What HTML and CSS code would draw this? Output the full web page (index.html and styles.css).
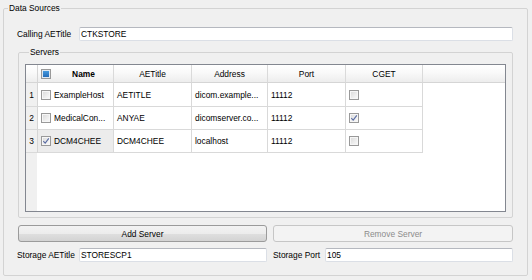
FILE: index.html
```html
<!DOCTYPE html>
<html lang="en">
<head>
    <meta charset="UTF-8">
    <title>Data Sources</title>
    <link rel="stylesheet" href="styles.css">
</head>
<body>
    <fieldset class="group data-sources">
        <legend>Data Sources</legend>

        <div class="field-row calling-row">
            <label class="field-label">Calling AETitle</label>
            <input type="text" class="text-input" value="CTKSTORE">
        </div>

        <fieldset class="group servers">
            <legend>Servers</legend>
            <div class="table-view">
                <table class="server-table">
                    <colgroup>
                        <col style="width: 12px">
                        <col style="width: 76px">
                        <col style="width: 78px">
                        <col style="width: 76px">
                        <col style="width: 78px">
                        <col style="width: 77px">
                        <col>
                    </colgroup>
                    <thead>
                        <tr>
                            <th></th>
                            <th>
                                <div class="head-cell">
                                    <span class="cb cb-partial"></span>
                                    <span class="head-label">Name</span>
                                </div>
                            </th>
                            <th>AETitle</th>
                            <th>Address</th>
                            <th>Port</th>
                            <th>CGET</th>
                            <th class="filler"></th>
                        </tr>
                    </thead>
                    <tbody>
                        <tr>
                            <td class="row-head">1</td>
                            <td><span class="cb"></span>ExampleHost</td>
                            <td>AETITLE</td>
                            <td>dicom.example...</td>
                            <td>11112</td>
                            <td><span class="cb"></span></td>
                            <td class="filler"></td>
                        </tr>
                        <tr>
                            <td class="row-head">2</td>
                            <td><span class="cb"></span>MedicalCon...</td>
                            <td>ANYAE</td>
                            <td>dicomserver.co...</td>
                            <td>11112</td>
                            <td><span class="cb cb-checked"><svg viewBox="0 0 8 8"><path d="M1.3 4.2 L3.2 6.2 L6.8 1.4"/></svg></span></td>
                            <td class="filler"></td>
                        </tr>
                        <tr>
                            <td class="row-head">3</td>
                            <td class="current"><span class="cb cb-checked"><svg viewBox="0 0 8 8"><path d="M1.3 4.2 L3.2 6.2 L6.8 1.4"/></svg></span>DCM4CHEE</td>
                            <td>DCM4CHEE</td>
                            <td>localhost</td>
                            <td>11112</td>
                            <td><span class="cb"></span></td>
                            <td class="filler"></td>
                        </tr>
                    </tbody>
                </table>
            </div>
        </fieldset>

        <div class="two-col buttons">
            <button class="btn">Add Server</button>
            <button class="btn" disabled>Remove Server</button>
        </div>

        <div class="two-col storage-row">
            <div class="field-row">
                <label class="field-label">Storage AETitle</label>
                <input type="text" class="text-input" value="STORESCP1">
            </div>
            <div class="field-row port-field">
                <label class="field-label">Storage Port</label>
                <input type="text" class="text-input" value="105">
            </div>
        </div>
    </fieldset>
</body>
</html>
```

FILE: styles.css
```css
body {
    margin: 0;
    background-color: #f0f0f0;
    font-family: "Liberation Sans", Arial, sans-serif;
    font-size: 8.4px;
    color: #000;
}

/* Group boxes */
.group {
    margin: 0;
    padding: 0;
    min-width: 0;
    border: 1px solid #d3d3d3;
    border-radius: 2px;
}

.group legend {
    margin-left: 4px;
    padding: 0 1px;
    height: 11px;
    line-height: 11px;
}

.data-sources {
    margin: 3px 4px 0 3px;
    padding: 0 14px 13px 14px;
}

.data-sources > legend {
    margin-left: -10px;
}

/* Labels and line edits */
.field-row {
    display: grid;
    grid-template-columns: 61px 1fr;
    align-items: center;
}

.calling-row {
    margin-top: 13px;
}

.field-label {
    margin-left: -1px;
    white-space: nowrap;
}

.text-input {
    box-sizing: border-box;
    height: 14px;
    width: 100%;
    margin: 0;
    padding: 0 1px;
    border: 1px solid #dbdfe6;
    border-top-color: #b5b8bf;
    border-radius: 2px;
    background-color: #fff;
    font: inherit;
    color: #000;
    outline: none;
}

/* Servers box */
.servers {
    margin-top: 6px;
    padding: 0 6px 5px 6px;
}

.table-view {
    box-sizing: border-box;
    margin-top: 6px;
    height: 148px;
    border: 1px solid #838790;
    background: linear-gradient(to right, #f0f0f0 11px, #fff 11px);
}

.server-table {
    width: 100%;
    table-layout: fixed;
    border-spacing: 0;
}

.server-table th,
.server-table td {
    padding: 0 0 0 3px;
    white-space: nowrap;
    overflow: hidden;
    text-align: left;
}

.server-table th {
    height: 17px;
    padding: 0;
    text-align: center;
    font-weight: normal;
    background: linear-gradient(#ffffff 0%, #f9f9f9 45%, #ededed 100%);
    border-right: 1px solid #dadada;
    border-bottom: 1px solid #d5d5d5;
}

.server-table th:first-child {
    border-right-color: #d5d5d5;
}

.server-table th.filler {
    border-right: none;
}

.head-cell {
    display: flex;
    align-items: center;
    padding-left: 3px;
}

.head-label {
    flex: 1;
    font-weight: bold;
}

.server-table td {
    height: 22px;
    border-right: 1px solid #d9d9d9;
    border-bottom: 1px solid #d9d9d9;
    background-color: #fff;
}

.server-table tbody tr:first-child td {
    height: 23px;
}

.server-table td.row-head {
    padding: 0;
    text-align: center;
    background-color: #f0f0f0;
    border-right-color: #d5d5d5;
}

.server-table td.current {
    background-color: #ececec;
}

.server-table td.filler {
    border: none;
    background: transparent;
}

/* Check boxes */
.cb {
    display: inline-block;
    box-sizing: border-box;
    width: 10px;
    height: 10px;
    margin-right: 3px;
    vertical-align: -2px;
    border: 1px solid #999999;
    background: linear-gradient(135deg, #d8d8d8 0%, #eeeeee 60%, #fbfbfb 100%);
    box-shadow: inset 0 0 0 1px #f6f6f6;
}

.cb svg {
    display: block;
    width: 8px;
    height: 8px;
}

.cb svg path {
    fill: none;
    stroke: #5a6ca3;
    stroke-width: 1.1;
}

.cb-partial {
    background: linear-gradient(#4aa0e4, #1e64b2);
    box-shadow: inset 0 0 0 1px #dfe8f2;
}

/* Buttons */
.two-col {
    display: grid;
    grid-template-columns: 249px 1fr;
    column-gap: 6px;
}

.buttons {
    margin-top: 7px;
}

.btn {
    height: 17px;
    margin: 0;
    padding: 0;
    border: 1px solid #9b9b9b;
    border-radius: 3px;
    background: linear-gradient(#f3f3f3 0%, #ececec 50%, #dedede 55%, #d3d3d3 100%);
    font: inherit;
    color: #000;
}

.btn:disabled {
    border-color: #c6c6c6;
    background: #f3f3f3;
    color: #8c8c8c;
}

.storage-row {
    margin-top: 6px;
}

.port-field {
    grid-template-columns: 52px 1fr;
}

.port-field .field-label {
    margin-left: 0;
}
```
